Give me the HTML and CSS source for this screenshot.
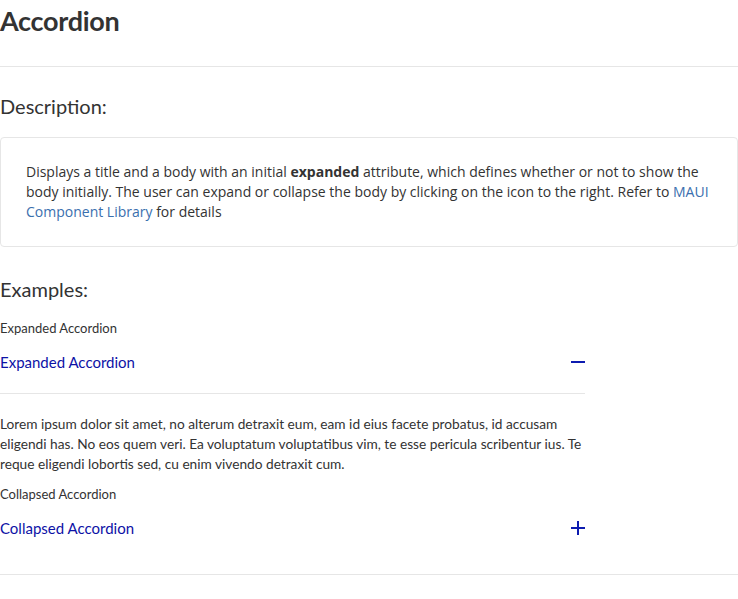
FILE: index.html
```html
<!DOCTYPE html>
<html lang="en">
<head>
<meta charset="utf-8">
<title>Accordion</title>
<link rel="stylesheet" href="styles.css">
</head>
<body>
<main class="page">
  <h1 class="page-title">Accordion</h1>
  <hr class="rule">
  <h2 class="section-title desc-title">Description:</h2>
  <div class="desc-card">
    <p class="desc-text">Displays a title and a body with an initial <strong>expanded</strong> attribute, which defines whether or not to show the body initially. The user can expand or collapse the body by clicking on the icon to the right. Refer to <a class="link" href="#">MAUI Component Library</a> for details</p>
  </div>
  <h2 class="section-title examples-title">Examples:</h2>

  <div class="example-label">Expanded Accordion</div>
  <div class="accordion is-expanded">
    <div class="acc-header">
      <span class="acc-title">Expanded Accordion</span>
      <svg class="acc-icon" width="14" height="14" viewBox="0 0 14 14" aria-hidden="true"><rect x="0" y="6" width="14" height="2" fill="currentColor"/></svg>
    </div>
    <div class="acc-body">Lorem ipsum dolor sit amet, no alterum detraxit eum, eam id eius facete probatus, id accusam eligendi has. No eos quem veri. Ea voluptatum voluptatibus vim, te esse pericula scribentur ius. Te reque eligendi lobortis sed, cu enim vivendo detraxit cum.</div>
  </div>

  <div class="example-label">Collapsed Accordion</div>
  <div class="accordion is-collapsed">
    <div class="acc-header">
      <span class="acc-title">Collapsed Accordion</span>
      <svg class="acc-icon" width="14" height="14" viewBox="0 0 14 14" aria-hidden="true"><rect x="0" y="6" width="14" height="2" fill="currentColor"/><rect x="6" y="0" width="2" height="14" fill="currentColor"/></svg>
    </div>
  </div>
  <hr class="rule bottom-rule">
</main>
</body>
</html>
```

FILE: styles.css
```css
html, body {
  margin: 0;
  padding: 0;
  background: #ffffff;
}

.page {
  width: 738px;
  color: #333333;
  font-family: "Lato", "Liberation Sans", sans-serif;
}

.page-title {
  margin: 0;
  font-size: 27px;
  line-height: 42px;
  font-weight: 700;
  color: #333333;
  letter-spacing: -0.3px;
}

.rule {
  border: 0;
  border-top: 1px solid #e6e6e6;
  margin: 24px 0 0 0;
  height: 0;
}

.section-title {
  margin: 30px 0 0 0;
  font-size: 20px;
  line-height: 24px;
  font-weight: 400;
  color: #333333;
}

.desc-title {
  margin-top: 27px;
}

.desc-card {
  margin-top: 19px;
  border: 1px solid #e6e6e6;
  border-radius: 4px;
  padding: 24px 25px;
}

.desc-text {
  margin: 0;
  font-family: "Open Sans", "Liberation Sans", sans-serif;
  font-size: 14px;
  line-height: 20px;
  color: #333333;
}

.desc-text strong {
  font-weight: 700;
}

.link {
  color: #3a6fae;
  text-decoration: none;
}

.examples-title {
  margin-top: 30px;
}

.example-label {
  margin-top: 17px;
  font-size: 13px;
  line-height: 20px;
  color: #333333;
}

.accordion {
  width: 585px;
  margin-top: 4px;
}

.acc-header {
  display: flex;
  align-items: center;
  justify-content: space-between;
  padding: 10px 0 21px 0;
  line-height: 20px;
}

.is-expanded .acc-header {
  border-bottom: 1px solid #e6e6e6;
}

.acc-title {
  font-size: 15px;
  color: #0d12a6;
}

.acc-icon {
  display: block;
  color: #0d1bb0;
  flex: none;
}

.acc-body {
  padding-top: 20px;
  font-size: 13.7px;
  line-height: 20px;
  color: #333333;
}

.is-expanded + .example-label {
  margin-top: 10px;
}

.bottom-rule {
  margin-top: 15px;
}
```
